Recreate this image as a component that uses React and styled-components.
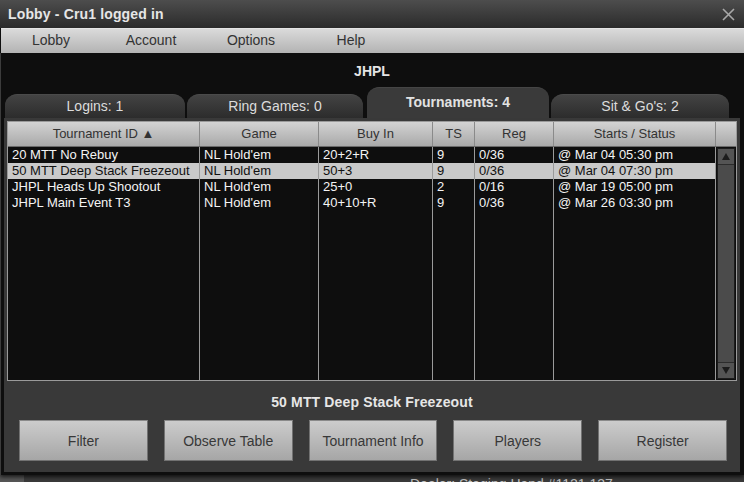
import React from "react";
import styled, { createGlobalStyle } from "styled-components";

const Global = createGlobalStyle`
  html, body { margin: 0; padding: 0; }
  body {
    background: #3a3a3a;
    font-family: "Liberation Sans", Arial, sans-serif;
    width: 744px;
    height: 482px;
    overflow: hidden;
  }
  * { box-sizing: border-box; }
`;

const Page = styled.div`
  width: 744px;
  height: 482px;
  display: flex;
  flex-direction: column;
  background: linear-gradient(90deg, #565656 0 24px, #3a3a3a 24px);
`;

const Window = styled.div`
  width: 744px;
  height: 475px;
  display: flex;
  flex-direction: column;
  background: #0e0e0e;
  box-shadow: 0 2px 4px rgba(0, 0, 0, 0.7);
  position: relative;
  z-index: 1;
`;

const TitleBar = styled.div`
  height: 28px;
  display: flex;
  align-items: center;
  justify-content: space-between;
  padding: 0 9px 1px 8px;
  background: linear-gradient(#4d4d4d, #2b2b2b);
  color: #e6e6e6;
  font-weight: bold;
  font-size: 14px;
  letter-spacing: 0.15px;
`;

const Close = styled.svg`
  width: 13px;
  height: 13px;
  margin-top: 1px;
`;

const MenuBar = styled.div`
  height: 25px;
  display: flex;
  margin-left: 1px;
  background: linear-gradient(#dadada, #b3b3b3);
  border-top: 1px solid #e4e4e4;
`;

const MenuItem = styled.div`
  width: 100px;
  text-align: center;
  font-size: 14px;
  line-height: 23px;
  color: #333;
`;

const Body = styled.div`
  flex: 1;
  display: flex;
  flex-direction: column;
  padding: 0 4px 3px 3px;
  border-left: 1px solid #3c3c3c;
  background: #0e0e0e;
`;

const ClubName = styled.div`
  height: 34px;
  text-align: center;
  color: #e4e4e4;
  font-weight: bold;
  font-size: 14px;
  line-height: 16px;
  padding-top: 10px;
`;

const Tabs = styled.div`
  height: 31px;
  display: flex;
  align-items: flex-end;
  gap: 2px;
  padding-left: 1px;
  padding-right: 10px;
`;

const Tab = styled.div`
  width: ${(p) => p.$w}px;
  height: ${(p) => (p.$active ? 31 : 24)}px;
  border-radius: 12px 12px 0 0;
  background: ${(p) =>
    p.$active ? "#3a3a3a" : "linear-gradient(#434343, #2c2c2c)"};
  border-top: 1px solid ${(p) => (p.$active ? "#454545" : "#4a4a4a")};
  color: ${(p) => (p.$active ? "#e2e2e2" : "#dcdcdc")};
  font-weight: ${(p) => (p.$active ? "bold" : "normal")};
  font-size: 14px;
  text-align: center;
  line-height: ${(p) => (p.$active ? 28 : 22)}px;
  margin-left: ${(p) => p.$ml || 0}px;
`;

const Panel = styled.div`
  height: 354px;
  background: #393939;
  padding: 3px 3px 11px 3px;
  display: flex;
  flex-direction: column;
`;

const Table = styled.div`
  height: 260px;
  border: 1px solid #9a9a9a;
  display: flex;
  flex-direction: column;
  background: #0e0e0e;
`;

const COLS = "192px 119px 114px 42px 79px 162px";

const HeaderRow = styled.div`
  height: 25px;
  display: grid;
  grid-template-columns: ${COLS} 1fr;
  background: linear-gradient(#d3d3d3, #a9a9a9);
  border-bottom: 1px solid #6a6a6a;
`;

const HeadCell = styled.div`
  border-right: 1px solid #8a8a8a;
  color: #333;
  font-size: 13px;
  line-height: 23px;
  text-align: center;
  &:last-child { border-right: none; }
`;

const Grid = styled.div`
  flex: 1;
  display: grid;
  grid-template-columns: 1fr 20px;
`;

const Rows = styled.div`
  display: flex;
  flex-direction: column;
`;

const Row = styled.div`
  height: 16px;
  display: grid;
  grid-template-columns: ${COLS};
  background: ${(p) => (p.$selected ? "#c9c9c9" : "transparent")};
  color: ${(p) => (p.$selected ? "#111" : "#f4f4f4")};
`;

const Filler = styled.div`
  flex: 1;
  display: grid;
  grid-template-columns: ${COLS};
`;

const Cell = styled.div`
  border-right: 1px solid #9a9a9a;
  font-size: 13px;
  line-height: 16px;
  padding-left: 4px;
  white-space: nowrap;
  overflow: hidden;
`;

const Scroll = styled.div`
  padding: 1px;
  display: flex;
`;

const Track = styled.div`
  flex: 1;
  border: 1px solid #1c1c1c;
  background: #4b4b4b;
  display: flex;
  flex-direction: column;
  justify-content: space-between;
`;

const ScrollBtn = styled.div`
  height: 16px;
  background: #545454;
  border-${(p) => (p.$down ? "top" : "bottom")}: 1px solid #2c2c2c;
  display: flex;
  align-items: center;
  justify-content: center;
  &::after {
    content: "";
    width: 0;
    height: 0;
    border-left: 4px solid transparent;
    border-right: 4px solid transparent;
    ${(p) =>
      p.$down
        ? "border-top: 7px solid #1c1c1c;"
        : "border-bottom: 7px solid #1c1c1c;"}
  }
`;

const Selected = styled.div`
  height: 39px;
  padding-top: 14px;
  text-align: center;
  color: #e6e6e6;
  font-weight: bold;
  font-size: 14px;
  line-height: 15px;
  letter-spacing: 0.15px;
`;

const Buttons = styled.div`
  height: 41px;
  display: grid;
  grid-template-columns: repeat(5, 1fr);
  gap: 16px;
  padding: 0 10px 0 12px;
`;

const Button = styled.button`
  height: 41px;
  border: 1px solid #727272;
  border-top-color: #8a8a8a;
  background: linear-gradient(#cccccc, #a6a6a6);
  color: #383838;
  font-family: "Liberation Sans", Arial, sans-serif;
  font-size: 14px;
  padding: 0;
`;

const Under = styled.div`
  flex: 1;
  padding-left: 410px;
  padding-top: 1px;
  color: #c4c4c4;
  font-size: 14px;
  line-height: 16px;
  white-space: nowrap;
  overflow: hidden;
`;

const rows = [
  ["20 MTT No Rebuy", "NL Hold'em", "20+2+R", "9", "0/36", "@ Mar 04 05:30 pm"],
  ["50 MTT Deep Stack Freezeout", "NL Hold'em", "50+3", "9", "0/36", "@ Mar 04 07:30 pm"],
  ["JHPL Heads Up Shootout", "NL Hold'em", "25+0", "2", "0/16", "@ Mar 19 05:00 pm"],
  ["JHPL Main Event T3", "NL Hold'em", "40+10+R", "9", "0/36", "@ Mar 26 03:30 pm"],
];

const tabs = [
  { label: "Logins: 1", w: 180 },
  { label: "Ring Games: 0", w: 176 },
  { label: "Tournaments: 4", w: 182, active: true, ml: 2 },
  { label: "Sit & Go's: 2", w: 178 },
];

export default function App() {
  return (
    <Page>
      <Global />
      <Window>
        <TitleBar>
          <span>Lobby - Cru1 logged in</span>
          <Close viewBox="0 0 13 13">
            <path d="M1 1L12 12M12 1L1 12" stroke="#a8a8a8" strokeWidth="1.6" />
          </Close>
        </TitleBar>
        <MenuBar>
          <MenuItem>Lobby</MenuItem>
          <MenuItem>Account</MenuItem>
          <MenuItem>Options</MenuItem>
          <MenuItem>Help</MenuItem>
        </MenuBar>
        <Body>
          <ClubName>JHPL</ClubName>
          <Tabs>
            {tabs.map((t) => (
              <Tab key={t.label} $w={t.w} $active={t.active} $ml={t.ml}>
                {t.label}
              </Tab>
            ))}
          </Tabs>
          <Panel>
            <Table>
              <HeaderRow>
                <HeadCell>Tournament ID ▲</HeadCell>
                <HeadCell>Game</HeadCell>
                <HeadCell>Buy In</HeadCell>
                <HeadCell>TS</HeadCell>
                <HeadCell>Reg</HeadCell>
                <HeadCell>Starts / Status</HeadCell>
                <HeadCell />
              </HeaderRow>
              <Grid>
                <Rows>
                  {rows.map((r, i) => (
                    <Row key={r[0]} $selected={i === 1}>
                      {r.map((c, j) => (
                        <Cell key={j}>{c}</Cell>
                      ))}
                    </Row>
                  ))}
                  <Filler>
                    {[0, 1, 2, 3, 4, 5].map((k) => (
                      <Cell key={k} />
                    ))}
                  </Filler>
                </Rows>
                <Scroll>
                  <Track>
                    <ScrollBtn />
                    <ScrollBtn $down />
                  </Track>
                </Scroll>
              </Grid>
            </Table>
            <Selected>50 MTT Deep Stack Freezeout</Selected>
            <Buttons>
              <Button>Filter</Button>
              <Button>Observe Table</Button>
              <Button>Tournament Info</Button>
              <Button>Players</Button>
              <Button>Register</Button>
            </Buttons>
          </Panel>
        </Body>
      </Window>
      <Under>Dealer: Staging Hand #1121 137</Under>
    </Page>
  );
}
